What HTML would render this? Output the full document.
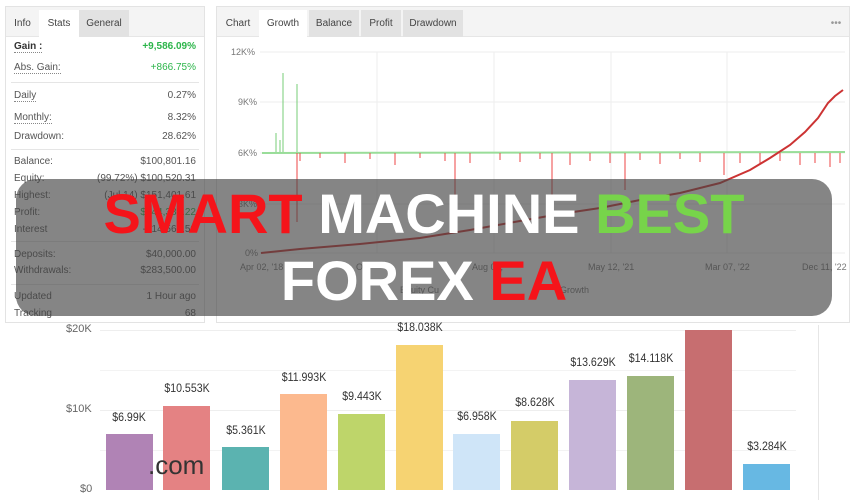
<!DOCTYPE html>
<html><head><meta charset="utf-8"><style>
*{margin:0;padding:0;box-sizing:border-box}
body{width:850px;height:500px;background:#fff;position:relative;overflow:hidden;font-family:"Liberation Sans",sans-serif;color:#555}
.abs{position:absolute}
.panel{position:absolute;border:1px solid #e3e3e3;background:#fff}
.tabs{position:absolute;left:0;top:0;right:0;height:30px;background:#f4f4f4;border-bottom:1px solid #e6e6e6}
.tab{position:absolute;top:3px;height:27px;font-size:10px;line-height:27px;text-align:center;color:#444}
.row{position:absolute;left:8px;right:8px;font-size:10px;height:14px}
.row .l{position:absolute;left:0}
.row .r{position:absolute;right:0}
.u{border-bottom:1px dotted #888}
.hr{position:absolute;left:5px;right:5px;height:1px;background:#e5e5e5}
.g{color:#2cb54a}
.ax{font-size:9px;color:#777;position:absolute}
.bar{position:absolute;width:47px;bottom:10px}
.bl{position:absolute;font-size:11.5px;color:#333;width:70px;text-align:center;transform:scaleX(.92)}
.yl{position:absolute;font-size:11px;color:#666;left:66px}
</style></head><body>

<div class="panel" style="left:5px;top:6px;width:200px;height:317px">
 <div class="tabs">
  <div class="tab" style="left:0;width:33px">Info</div>
  <div class="tab" style="left:33px;width:40px;background:#fff">Stats</div>
  <div class="tab" style="left:73px;width:50px;background:#e2e2e2">General</div>
 </div>
 <div class="row" style="top:34px"><span class="l u" style="font-weight:bold;color:#333">Gain :</span><span class="r g" style="font-weight:bold">+9,586.09%</span></div>
 <div class="row" style="top:55px"><span class="l u">Abs. Gain:</span><span class="r g">+866.75%</span></div>
 <div class="hr" style="top:75px"></div>
 <div class="row" style="top:83px"><span class="l u">Daily</span><span class="r">0.27%</span></div>
 <div class="row" style="top:105px"><span class="l u">Monthly:</span><span class="r">8.32%</span></div>
 <div class="row" style="top:124px"><span class="l">Drawdown:</span><span class="r">28.62%</span></div>
 <div class="hr" style="top:142px"></div>
 <div class="row" style="top:149px"><span class="l">Balance:</span><span class="r">$100,801.16</span></div>
 <div class="row" style="top:166px"><span class="l">Equity:</span><span class="r">(99.72%) $100,520.31</span></div>
 <div class="row" style="top:183px"><span class="l">Highest:</span><span class="r">(Jul 14) $151,401.61</span></div>
 <div class="row" style="top:200px"><span class="l">Profit:</span><span class="r g">$144,389.22</span></div>
 <div class="row" style="top:217px"><span class="l">Interest</span><span class="r">-$14,567.50</span></div>
 <div class="hr" style="top:234px"></div>
 <div class="row" style="top:242px"><span class="l">Deposits:</span><span class="r">$40,000.00</span></div>
 <div class="row" style="top:258px"><span class="l">Withdrawals:</span><span class="r">$283,500.00</span></div>
 <div class="hr" style="top:277px"></div>
 <div class="row" style="top:284px"><span class="l">Updated</span><span class="r">1 Hour ago</span></div>
 <div class="row" style="top:301px"><span class="l">Tracking</span><span class="r">68</span></div>
</div>

<div class="panel" style="left:216px;top:6px;width:634px;height:317px">
 <div class="tabs">
  <div class="tab" style="left:0;width:42px">Chart</div>
  <div class="tab" style="left:42px;width:48px;background:#fff">Growth</div>
  <div class="tab" style="left:92px;width:50px;background:#e2e2e2">Balance</div>
  <div class="tab" style="left:144px;width:40px;background:#e2e2e2">Profit</div>
  <div class="tab" style="left:186px;width:60px;background:#e2e2e2">Drawdown</div>
  <div class="tab" style="right:6px;width:14px;color:#999">•••</div>
 </div>
</div>
<svg class="abs" style="left:0;top:0" width="850" height="330">
 <g stroke="#eee" stroke-width="1">
  <line x1="260" y1="52" x2="845" y2="52"/><line x1="260" y1="102" x2="845" y2="102"/>
  <line x1="260" y1="153" x2="845" y2="153"/><line x1="260" y1="204" x2="845" y2="204"/>
  <line x1="260" y1="253" x2="845" y2="253"/>
  <line x1="377" y1="52" x2="377" y2="253"/><line x1="494" y1="52" x2="494" y2="253"/>
  <line x1="611" y1="52" x2="611" y2="253"/><line x1="727" y1="52" x2="727" y2="253"/>
 </g>
 <g stroke="#7c7" stroke-width="1">
  <line x1="283" y1="153" x2="283" y2="73"/><line x1="297" y1="153" x2="297" y2="84"/>
  <line x1="276" y1="153" x2="276" y2="133"/><line x1="280" y1="153" x2="280" y2="140"/>
  <path d="M262 153 L845 152" stroke-width="2" stroke="#9d9" />
 </g>
 <g stroke="#e44" stroke-width="1">
  <line x1="297" y1="153" x2="297" y2="222"/><line x1="455" y1="153" x2="455" y2="220"/>
  <line x1="552" y1="153" x2="552" y2="220"/><line x1="625" y1="153" x2="625" y2="190"/>
  <line x1="724" y1="153" x2="724" y2="175"/>
  <path d="M300 153v8M320 153v5M345 153v10M370 153v6M395 153v12M420 153v5M445 153v8M470 153v10M500 153v7M520 153v9M540 153v6M570 153v12M590 153v8M610 153v10M640 153v7M660 153v11M680 153v6M700 153v9M740 153v10M760 153v12M780 153v8M800 153v12M815 153v10M830 153v14M840 153v10"/>
 </g>
 <path d="M261 253 L300 249 L360 244 L420 238 L470 230 L520 221 L560 214 L600 208 L640 200 L680 193 L720 183 L750 170 L770 158 L790 145 L805 132 L818 118 L828 103 L835 96 L843 90" fill="none" stroke="#c33" stroke-width="2"/>
</svg>
<div class="ax" style="left:231px;top:47px">12K%</div>
<div class="ax" style="left:238px;top:97px">9K%</div>
<div class="ax" style="left:238px;top:148px">6K%</div>
<div class="ax" style="left:238px;top:199px">3K%</div>
<div class="ax" style="left:245px;top:248px">0%</div>
<div class="ax" style="left:240px;top:262px">Apr 02, '18</div>
<div class="ax" style="left:356px;top:262px">Oct</div>
<div class="ax" style="left:472px;top:262px">Aug 09, '</div>
<div class="ax" style="left:588px;top:262px">May 12, '21</div>
<div class="ax" style="left:705px;top:262px">Mar 07, '22</div>
<div class="ax" style="left:802px;top:262px">Dec 11, '22</div>
<div class="ax" style="left:400px;top:285px">Equity Cu</div>
<div class="ax" style="left:560px;top:285px">Growth</div>

<div class="abs" style="left:100px;top:330px;width:696px;height:1px;background:#eee"></div>
<div class="abs" style="left:100px;top:370px;width:696px;height:1px;background:#f3f3f3"></div>
<div class="abs" style="left:100px;top:410px;width:696px;height:1px;background:#eee"></div>
<div class="abs" style="left:100px;top:450px;width:696px;height:1px;background:#f3f3f3"></div>
<div class="yl" style="top:323px">$20K</div>
<div class="yl" style="top:403px">$10K</div>
<div class="yl" style="top:483px;left:80px">$0</div>
<div class="abs" style="left:0;top:0;width:850px;height:500px">
 <div class="bar" style="left:106px;height:56px;background:#b083b5"></div>
 <div class="bar" style="left:163px;height:84px;background:#e48283"></div>
 <div class="bar" style="left:222px;height:43px;background:#5bb3b0"></div>
 <div class="bar" style="left:280px;height:96px;background:#fcb98e"></div>
 <div class="bar" style="left:338px;height:76px;background:#bed56a"></div>
 <div class="bar" style="left:396px;height:145px;background:#f6d372"></div>
 <div class="bar" style="left:453px;height:56px;background:#cfe5f8"></div>
 <div class="bar" style="left:511px;height:69px;background:#d4cc68"></div>
 <div class="bar" style="left:569px;height:110px;background:#c6b5d8"></div>
 <div class="bar" style="left:627px;height:114px;background:#9db57b"></div>
 <div class="bar" style="left:685px;height:160px;background:#c76e70"></div>
 <div class="bar" style="left:743px;height:26px;background:#67b8e3"></div>
</div>
<div class="bl" style="left:94px;top:412px">$6.99K</div>
<div class="bl" style="left:152px;top:383px">$10.553K</div>
<div class="bl" style="left:211px;top:425px">$5.361K</div>
<div class="bl" style="left:269px;top:372px">$11.993K</div>
<div class="bl" style="left:327px;top:391px">$9.443K</div>
<div class="bl" style="left:385px;top:322px">$18.038K</div>
<div class="bl" style="left:442px;top:411px">$6.958K</div>
<div class="bl" style="left:500px;top:397px">$8.628K</div>
<div class="bl" style="left:558px;top:357px">$13.629K</div>
<div class="bl" style="left:616px;top:353px">$14.118K</div>
<div class="bl" style="left:732px;top:441px">$3.284K</div>
<div class="abs" style="left:148px;top:450px;font-size:26px;color:#333">.com</div>
<div class="abs" style="left:818px;top:325px;width:1px;height:175px;background:#e6e6e6"></div>

<div class="abs" style="left:16px;top:179px;width:816px;height:137px;border-radius:20px;background:rgba(68,68,68,.65)"></div>
<div class="abs" style="left:16px;top:184px;width:816px;text-align:center;font-weight:bold;font-size:56px;line-height:60px;color:#fff;white-space:nowrap">
 <div><span style="color:#f5141a">SMART</span> MACHINE <span style="color:#77d44a">BEST</span></div>
 <div style="margin-top:7px"><span>FOREX</span> <span style="color:#f5141a">EA</span></div>
</div>
</body></html>
